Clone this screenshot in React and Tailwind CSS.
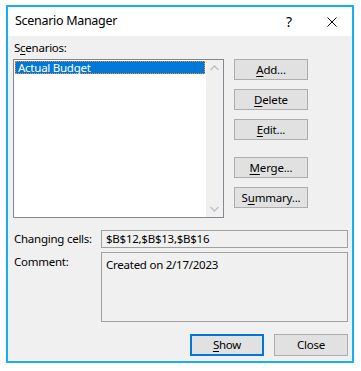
export default function App() {
  const U = ({ children }) => <span className="underline underline-offset-[2px] decoration-[1px]">{children}</span>;
  const Btn = ({ children, className = "" }) => (
    <div className={"w-[74px] h-[21px] border border-[#adadad] bg-[#e1e1e1] flex items-center justify-center text-[11.5px] tracking-[-0.2px] text-black " + className}>
      {children}
    </div>
  );
  return (
    <div className="w-[361px] h-[371px] bg-white pt-[5px] pl-[6px] font-['Noto_Sans',sans-serif] text-black">
      <div className="w-[348px] h-[358px] border-2 border-[#17b0ee] bg-[#f0f0f0] flex flex-col">
        <div className="h-[29px] bg-white flex items-center pl-[7px] shrink-0">
          <span className="text-[12.5px] leading-none tracking-[-0.3px]">Scenario Manager</span>
          <span className="ml-auto text-[14px] leading-none mr-[35px]">?</span>
          <svg width="10" height="10" viewBox="0 0 10 10" className="mr-[15px]">
            <path d="M0.5 0.5 L9.5 9.5 M9.5 0.5 L0.5 9.5" stroke="#000" strokeWidth="1" />
          </svg>
        </div>
        <div className="flex-1 flex flex-col pl-[5px] pr-[4px] text-[11.5px] tracking-[-0.25px]">
          <div className="h-[23px] flex items-center pl-[1px] leading-none">
            S<U>c</U>enarios:
          </div>
          <div className="flex gap-[10px]">
            <div className="w-[211px] h-[159px] border border-[#828790] bg-white flex">
              <div className="flex-1 p-[1px]">
                <div className="h-[13px] bg-[#0078d7] border border-dotted border-[#ff8728] text-white leading-none flex items-center pl-[2px]">
                  Actual Budget
                </div>
              </div>
              <div className="w-[17px] bg-[#f0f0f0] flex flex-col justify-between items-center py-[5px]">
                <svg width="9" height="6" viewBox="0 0 9 6"><path d="M0.5 5 L4.5 1 L8.5 5" fill="none" stroke="#c0c0c0" strokeWidth="1.5" /></svg>
                <svg width="9" height="6" viewBox="0 0 9 6"><path d="M0.5 1 L4.5 5 L8.5 1" fill="none" stroke="#c0c0c0" strokeWidth="1.5" /></svg>
              </div>
            </div>
            <div className="flex flex-col">
              <Btn><U>A</U>dd...</Btn>
              <Btn className="mt-[9px]"><U>D</U>elete</Btn>
              <Btn className="mt-[9px]"><U>E</U>dit...</Btn>
              <Btn className="mt-[17px]"><U>M</U>erge...</Btn>
              <Btn className="mt-[9px]">S<U>u</U>mmary...</Btn>
            </div>
          </div>
          <div className="flex mt-[12px] h-[18px]">
            <div className="w-[88px] pl-[1px] leading-none flex items-center">Changing cells:</div>
            <div className="flex-1 border border-[#a0a0a0] bg-[#f0f0f0] leading-none flex items-center pl-[4px]">$B$12,$B$13,$B$16</div>
          </div>
          <div className="flex mt-[4px] h-[70px]">
            <div className="w-[88px] pl-[1px] leading-none pt-[4px]">Comment:</div>
            <div className="flex-1 border border-[#a0a0a0] bg-[#f0f0f0] leading-none pl-[4px] pt-[6px]">Created on 2/17/2023</div>
          </div>
          <div className="flex justify-end mt-[12px] gap-[10px]">
            <div className="w-[74px] h-[22px] border-2 border-[#0078d7] bg-[#e1e1e1] flex items-center justify-center"><U>S</U>how</div>
            <div className="w-[74px] h-[22px] border border-[#adadad] bg-[#e1e1e1] flex items-center justify-center">Close</div>
          </div>
        </div>
      </div>
    </div>
  );
}
